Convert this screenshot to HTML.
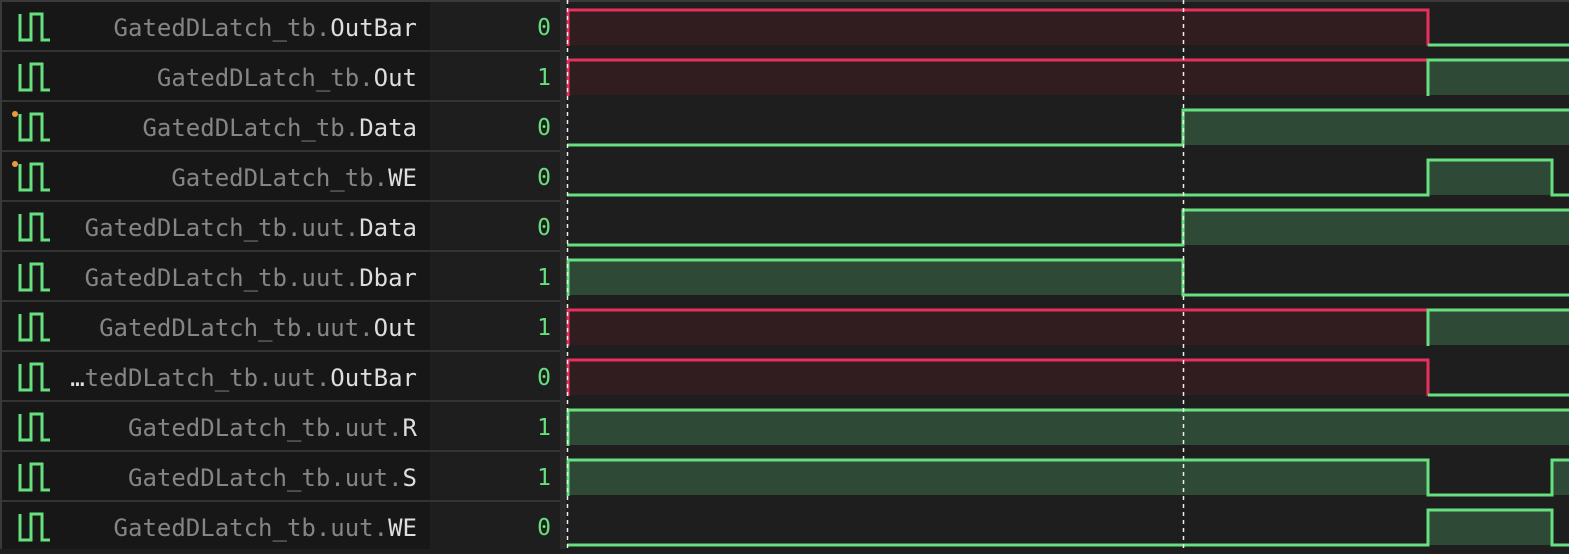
<!DOCTYPE html>
<html><head><meta charset="utf-8"><style>
html,body{margin:0;padding:0;background:#1e1e1e;width:1569px;height:549px;overflow:hidden}
.row{position:absolute;left:2px;width:558px;height:48px;background:#1e1e1e}
.lab{position:absolute;left:0;top:0;width:428px;height:48px;background:#171717}
.name{position:absolute;right:143px;top:0;line-height:52px;font-family:"DejaVu Sans Mono","Liberation Mono",monospace;font-size:24px;color:#858585;white-space:nowrap}
.name b{font-weight:normal;color:#dedede}
.val{position:absolute;right:9px;top:0;line-height:52px;font-family:"DejaVu Sans Mono","Liberation Mono",monospace;font-size:23px;color:#66e07f}
.ic{position:absolute;left:0;top:0}
.dot{position:absolute;left:10px;top:9px;width:6px;height:6px;border-radius:50%;background:#e89a3c}
</style></head><body>
<div style="position:absolute;left:0;top:0;width:1569px;height:2px;background:#3a3a3a"></div>
<div style="position:absolute;left:0;top:0;width:2px;height:549px;background:#3a3a3a"></div>
<div style="position:absolute;left:560px;top:0;width:6px;height:549px;background:#2a2a2a"></div>

<div class="row" style="top:2px"><div class="lab"></div><svg class="ic" width="60" height="48"><path d="M18,12V38H29V12H40V38H48" fill="none" stroke="#66e07f" stroke-width="3"/></svg><div class="name">GatedDLatch_tb.<b>OutBar</b></div><div class="val">0</div></div>
<div class="row" style="top:52px"><div class="lab"></div><svg class="ic" width="60" height="48"><path d="M18,12V38H29V12H40V38H48" fill="none" stroke="#66e07f" stroke-width="3"/></svg><div class="name">GatedDLatch_tb.<b>Out</b></div><div class="val">1</div></div>
<div class="row" style="top:102px"><div class="lab"></div><svg class="ic" width="60" height="48"><path d="M18,12V38H29V12H40V38H48" fill="none" stroke="#66e07f" stroke-width="3"/></svg><div class="dot"></div><div class="name">GatedDLatch_tb.<b>Data</b></div><div class="val">0</div></div>
<div class="row" style="top:152px"><div class="lab"></div><svg class="ic" width="60" height="48"><path d="M18,12V38H29V12H40V38H48" fill="none" stroke="#66e07f" stroke-width="3"/></svg><div class="dot"></div><div class="name">GatedDLatch_tb.<b>WE</b></div><div class="val">0</div></div>
<div class="row" style="top:202px"><div class="lab"></div><svg class="ic" width="60" height="48"><path d="M18,12V38H29V12H40V38H48" fill="none" stroke="#66e07f" stroke-width="3"/></svg><div class="name">GatedDLatch_tb.uut.<b>Data</b></div><div class="val">0</div></div>
<div class="row" style="top:252px"><div class="lab"></div><svg class="ic" width="60" height="48"><path d="M18,12V38H29V12H40V38H48" fill="none" stroke="#66e07f" stroke-width="3"/></svg><div class="name">GatedDLatch_tb.uut.<b>Dbar</b></div><div class="val">1</div></div>
<div class="row" style="top:302px"><div class="lab"></div><svg class="ic" width="60" height="48"><path d="M18,12V38H29V12H40V38H48" fill="none" stroke="#66e07f" stroke-width="3"/></svg><div class="name">GatedDLatch_tb.uut.<b>Out</b></div><div class="val">1</div></div>
<div class="row" style="top:352px"><div class="lab"></div><svg class="ic" width="60" height="48"><path d="M18,12V38H29V12H40V38H48" fill="none" stroke="#66e07f" stroke-width="3"/></svg><div class="name"><span style="color:#dedede">…</span>tedDLatch_tb.uut.<b>OutBar</b></div><div class="val">0</div></div>
<div class="row" style="top:402px"><div class="lab"></div><svg class="ic" width="60" height="48"><path d="M18,12V38H29V12H40V38H48" fill="none" stroke="#66e07f" stroke-width="3"/></svg><div class="name">GatedDLatch_tb.uut.<b>R</b></div><div class="val">1</div></div>
<div class="row" style="top:452px"><div class="lab"></div><svg class="ic" width="60" height="48"><path d="M18,12V38H29V12H40V38H48" fill="none" stroke="#66e07f" stroke-width="3"/></svg><div class="name">GatedDLatch_tb.uut.<b>S</b></div><div class="val">1</div></div>
<div class="row" style="top:502px;height:47px"><div class="lab" style="height:47px"></div><svg class="ic" width="60" height="48"><path d="M18,12V38H29V12H40V38H48" fill="none" stroke="#66e07f" stroke-width="3"/></svg><div class="name">GatedDLatch_tb.uut.<b>WE</b></div><div class="val">0</div></div>
<div style="position:absolute;left:2px;top:50px;width:558px;height:2px;background:#333"></div>
<div style="position:absolute;left:2px;top:100px;width:558px;height:2px;background:#333"></div>
<div style="position:absolute;left:2px;top:150px;width:558px;height:2px;background:#333"></div>
<div style="position:absolute;left:2px;top:200px;width:558px;height:2px;background:#333"></div>
<div style="position:absolute;left:2px;top:250px;width:558px;height:2px;background:#333"></div>
<div style="position:absolute;left:2px;top:300px;width:558px;height:2px;background:#333"></div>
<div style="position:absolute;left:2px;top:350px;width:558px;height:2px;background:#333"></div>
<div style="position:absolute;left:2px;top:400px;width:558px;height:2px;background:#333"></div>
<div style="position:absolute;left:2px;top:450px;width:558px;height:2px;background:#333"></div>
<div style="position:absolute;left:2px;top:500px;width:558px;height:2px;background:#333"></div>

<svg style="position:absolute;left:0;top:0" width="1569" height="549">
<defs>
<g id="X0"><rect x="567" y="10" width="861" height="35" fill="#311c1f"/><path d="M568,46V10H1428V46" fill="none" stroke="#e8305f" stroke-width="3"/><path d="M1428,45H1569" fill="none" stroke="#66e07f" stroke-width="3"/></g>
<g id="X1"><rect x="567" y="10" width="861" height="35" fill="#311c1f"/><rect x="1428" y="10" width="141" height="35" fill="#2e4a37"/><path d="M568,46V10H1428" fill="none" stroke="#e8305f" stroke-width="3"/><path d="M1428,46V10H1569" fill="none" stroke="#66e07f" stroke-width="3"/></g>
<g id="D"><rect x="1183" y="10" width="386" height="35" fill="#2e4a37"/><path d="M567,45H1183V10H1569" fill="none" stroke="#66e07f" stroke-width="3"/></g>
<g id="W"><rect x="1428" y="10" width="124" height="35" fill="#2e4a37"/><path d="M567,45H1428V10H1552V45H1569" fill="none" stroke="#66e07f" stroke-width="3"/></g>
</defs>
<use href="#X0" y="0"/>
<use href="#X1" y="50"/>
<use href="#D" y="100"/>
<use href="#W" y="150"/>
<use href="#D" y="200"/>
<g transform="translate(0,250)"><rect x="567" y="10" width="616" height="35" fill="#2e4a37"/><path d="M568,46V10H1183V45H1569" fill="none" stroke="#66e07f" stroke-width="3"/></g>
<use href="#X1" y="300"/>
<use href="#X0" y="350"/>
<g transform="translate(0,400)"><rect x="567" y="10" width="1002" height="35" fill="#2e4a37"/><path d="M568,46V10H1569" fill="none" stroke="#66e07f" stroke-width="3"/></g>
<g transform="translate(0,450)"><rect x="567" y="10" width="861" height="35" fill="#2e4a37"/><rect x="1552" y="10" width="17" height="35" fill="#2e4a37"/><path d="M568,46V10H1428V45H1552V10H1569" fill="none" stroke="#66e07f" stroke-width="3"/></g>
<use href="#W" y="500"/>
<path d="M1183.5,0V549M567.5,0V549" stroke="#eeeeee" stroke-width="1.5" stroke-dasharray="4,4"/>
</svg>
</body></html>
